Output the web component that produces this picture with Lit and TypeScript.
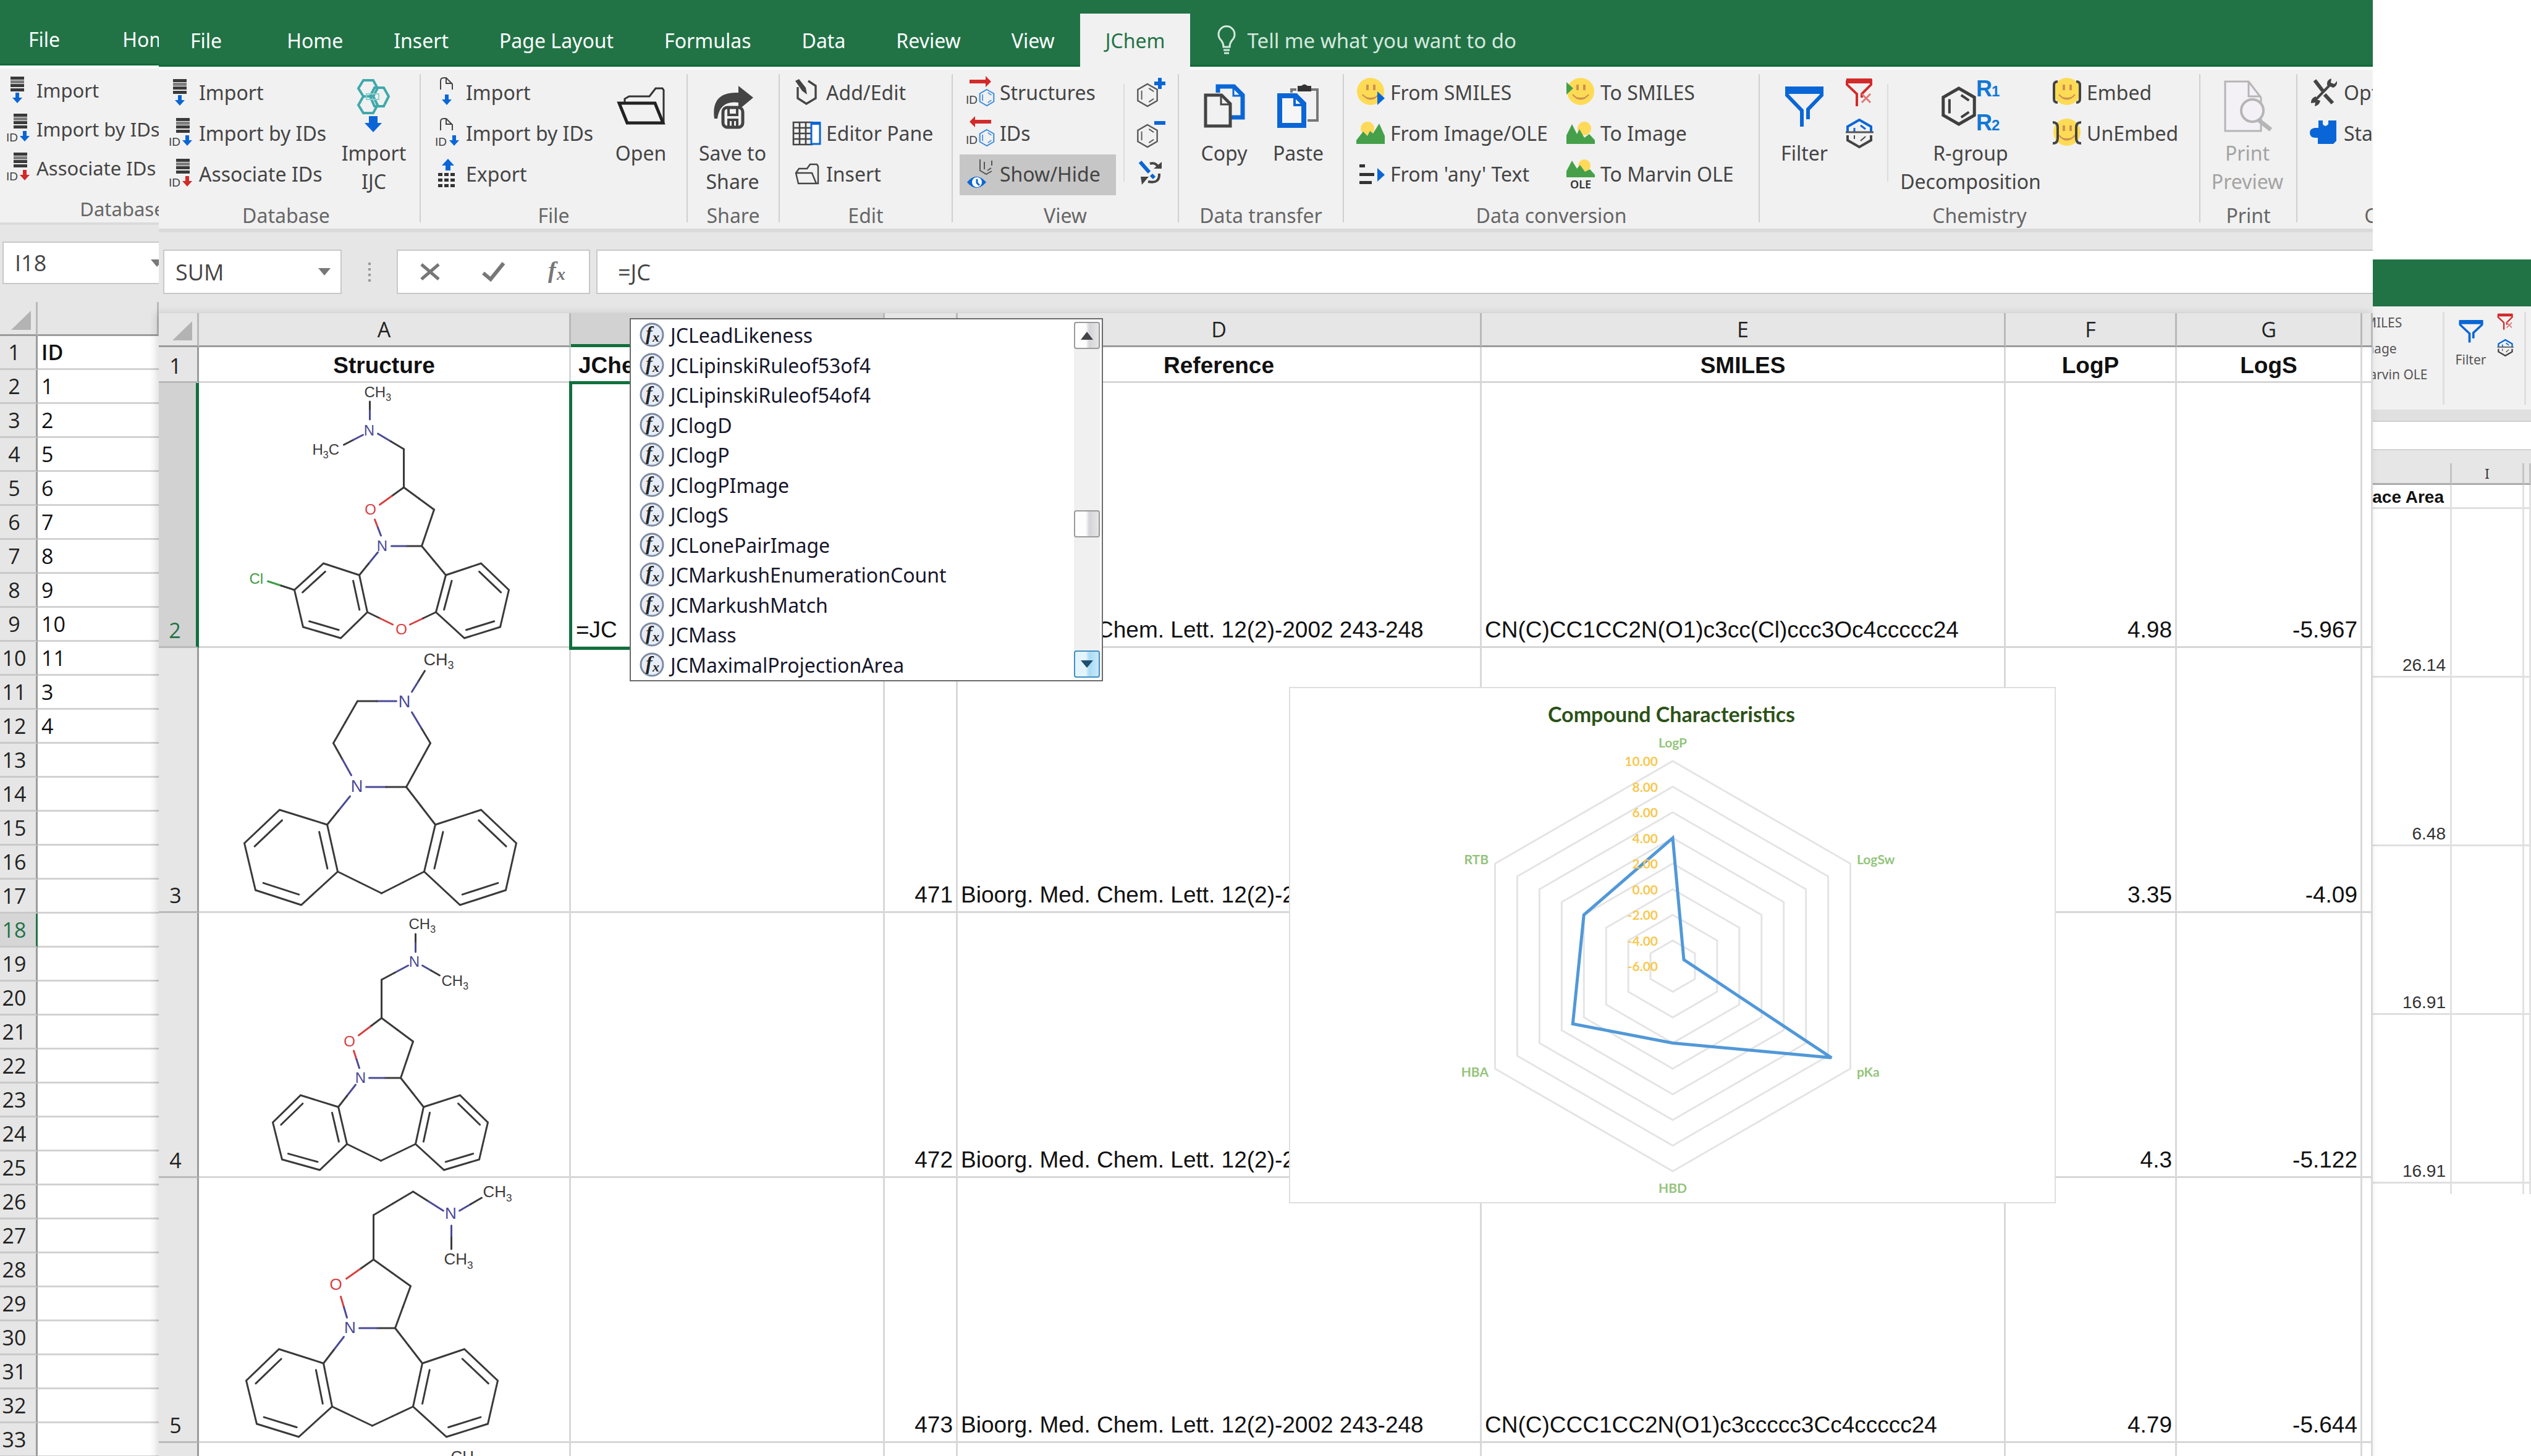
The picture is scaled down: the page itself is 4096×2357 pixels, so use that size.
import { LitElement, html, svg, css, nothing, TemplateResult, SVGTemplateResult } from "lit";
import { customElement } from "lit/decorators.js";
import { classMap } from "lit/directives/class-map.js";

const DARK = "#444";
const BLUE = "#0a66d6";
const RED = "#d22a2a";
const TEAL = "#3fa9ab";
const GREEN = "#45a049";
const SUN = "#ffd95a";

type Art = SVGTemplateResult;

/* ---------- icon building blocks ---------- */

const stack = (x: number, y: number): Art => svg`
  <path d="M${x} ${y}h22v5h-22zM${x} ${y + 12}h22v5h-22zM${x} ${y + 19}h22v5h-22z" fill="#3a3a3a"/>
  <path d="M${x} ${y + 6}h22v5h-22z" fill="#7d7d7d"/>`;
const down = (cx: number, y: number, c: string): Art => svg`
  <path d="M${cx - 3} ${y}h6v8h5l-8 9l-8 -9h5z" fill="${c}"/>`;
const idText = (x: number, y: number): Art => svg`
  <text x="${x}" y="${y}" font-family="Liberation Sans, sans-serif" font-size="19" fill="${DARK}">ID</text>`;
const pageCurl = (x: number, y: number): Art => svg`
  <path d="M${x} ${y + 20}v-14q0 -5 5 -5h4l10 10v9M${x + 9} ${y + 1}v9h9" fill="none" stroke="${DARK}" stroke-width="2"/>`;
const benzene = (cx: number, cy: number, r: number, c: string, w = 2): Art => {
  const k = r * 0.87;
  return svg`<path d="M${cx} ${cy - r}l${k} ${r / 2}v${r}l${-k} ${r / 2}l${-k} ${-r / 2}v${-r}z" fill="none" stroke="${c}" stroke-width="${w}"/>
  <path d="M${cx - k * 0.6} ${cy - r * 0.4}v${r * 0.8}M${cx + k * 0.15} ${cy - r * 0.62}l${k * 0.5} ${r * 0.3}M${cx + k * 0.15} ${cy + r * 0.62}l${k * 0.5} ${-r * 0.3}" fill="none" stroke="${c}" stroke-width="${w * 0.8}"/>`;
};
const smile = (cx: number, cy: number): Art => svg`
  <circle cx="${cx}" cy="${cy}" r="22" fill="#fddb55"/>
  <path d="M${cx - 5} ${cy - 11}v9M${cx + 6} ${cy - 11}v9" stroke="#cf8f52" stroke-width="4"/>
  <path d="M${cx - 13} ${cy + 5}q13 15 26 0q-4 6 -13 6t-13 -6z" fill="#cf8f52" stroke="#cf8f52" stroke-width="2"/>`;

const ART: Record<string, Art> = {
  dbImport: svg`${stack(8, 2)}${down(19, 28, BLUE)}`,
  dbIds: svg`${stack(13, -1)}${idText(1, 44)}${down(31, 27, BLUE)}`,
  dbAssoc: svg`${stack(13, -1)}${idText(1, 44)}${down(31, 27, RED)}`,
  fileImport: svg`${pageCurl(9, -1)}${down(19, 27, BLUE)}`,
  fileIds: svg`${pageCurl(9, -1)}${idText(0, 44)}${down(31, 27, BLUE)}`,
  fileExport: svg`<path d="M17 18v-8h-6l10 -11l10 11h-6v8z" fill="${BLUE}"/>
    <path d="M5 22h7v5h-7zM15 22h7v5h-7zM25 22h7v5h-7zM5 31h7v5h-7zM15 31h7v5h-7zM25 31h7v5h-7zM5 40h7v5h-7zM15 40h7v5h-7zM25 40h7v5h-7z" fill="#333"/>`,
  addEdit: svg`<path d="M9 15v18l14 9l15 -9v-20l-12 -8" fill="none" stroke="${DARK}" stroke-width="3.4"/>
    <path d="M5 5l6 -3l11 14l2 11l-8 -6z" fill="${DARK}"/>`,
  editorPane: svg`<path d="M2 6h30v36h-30zM2 15h30M2 24h30M2 33h30M12 6v36M22 6v36" fill="none" stroke="${DARK}" stroke-width="2.6"/>
    <rect x="31" y="7" width="14" height="34" fill="#fff" stroke="${BLUE}" stroke-width="3"/><path d="M30 5h16v5h-16z" fill="${BLUE}"/>`,
  insert: svg`<path d="M6 22l5 -7h13l5 -7h11l2 3v28h-32zM6 22h26l7 17" fill="none" stroke="${DARK}" stroke-width="2.4"/>`,
  structures: svg`<path d="M6 3h26v-6l9 9l-9 9v-6h-26z" fill="${RED}"/>${idText(0, 42)}${benzene(34, 32, 13, "#3d8ade")}`,
  ids: svg`<path d="M41 2h-26v-6l-9 9l9 9v-6h26z" fill="${RED}"/>${idText(0, 41)}${benzene(34, 31, 13, "#3d8ade")}`,
  showHide: svg`<path d="M23 0v18l10 6l9 -5M42 2v8M30 4v12M35 18l6 -4" fill="none" stroke="#555" stroke-width="2"/>
    <path d="M2 37q15 -18 31 0q-16 18 -31 0z" fill="${BLUE}"/><circle cx="18" cy="37" r="8" fill="#fff"/><path d="M18 32v6l4 4" stroke="${BLUE}" stroke-width="3" fill="none"/>`,
  hexPlus: svg`${benzene(17, 28, 18, "#5a5a5a", 2.4)}<path d="M37 0v18M28 9h18" stroke="${BLUE}" stroke-width="6"/>`,
  hexMinus: svg`${benzene(17, 28, 18, "#5a5a5a", 2.4)}<path d="M28 7h18" stroke="${BLUE}" stroke-width="6"/>`,
  refresh: svg`<path d="M5 4l15 17M23 25l5 5" stroke="${BLUE}" stroke-width="6"/>
    <path d="M21 7q9 -3 14 6M36 23q1 17 -18 13" fill="none" stroke="${DARK}" stroke-width="4"/>
    <path d="M27 15h13v-11zM6 28h13l-11 13z" fill="${DARK}"/>`,
  fromSmiles: svg`${smile(23, 22)}<path d="M34 22l12 11l-12 11z" fill="${BLUE}"/>`,
  toSmiles: svg`${smile(23, 22)}<path d="M0 7l11 10l-11 10z" fill="${GREEN}"/>`,
  fromImage: svg`<circle cx="18" cy="16" r="11" fill="${SUN}"/><path d="M0 41v-6l11 -14l7 7l4 -8l5 4l10 -16l9 20v13z" fill="${GREEN}"/>`,
  toImage: svg`<circle cx="29" cy="16" r="11" fill="${SUN}"/><path d="M0 41v-14l9 -18l8 16l4 -8l8 14l8 -6l9 10v6z" fill="${GREEN}"/>`,
  anyText: svg`<path d="M5 8h9v5h-9zM5 22h24v5h-24zM5 35h20v5h-20z" fill="#333"/><path d="M34 14l12 11l-12 11z" fill="${BLUE}"/>`,
  ole: svg`<circle cx="29" cy="10" r="10" fill="${SUN}"/><path d="M0 29v-10l9 -17l8 13l5 -6l8 11l8 -4l8 9v4z" fill="${GREEN}"/>
    <text x="23" y="47" text-anchor="middle" font-family="Noto Sans, sans-serif" font-weight="600" font-size="18" fill="#333">OLE</text>`,
  filterX: svg`<path d="M2 4h39v7l-15 15v6M2 4v7l16 15v20" fill="none" stroke="${RED}" stroke-width="4"/><path d="M1 1h41v8h-41z" fill="${RED}"/><path d="M26 26l14 14M40 26l-14 14" stroke="#df7777" stroke-width="3"/>`,
  halfHex: svg`<path d="M3 22v-9l19 -11l19 11v9" fill="none" stroke="${BLUE}" stroke-width="4"/><path d="M14 15v6M24 11l8 6" stroke="${BLUE}" stroke-width="3"/>
    <path d="M0 22h45" stroke="#555" stroke-width="3"/><path d="M3 27v8l19 11l19 -11v-8" fill="none" stroke="${DARK}" stroke-width="4"/><path d="M14 27v6M24 36l8 -7" stroke="${DARK}" stroke-width="2"/>`,
  embed: svg`${smile(23, 22)}<path d="M8 6q-6 0 -6 6v22q0 6 6 6M38 6q6 0 6 6v22q0 6 -6 6" fill="none" stroke="${DARK}" stroke-width="4"/>`,
  unEmbed: svg`${smile(23, 22)}<path d="M0 6q8 0 8 8v18q0 8 -8 8M46 6q-8 0 -8 8v18q0 8 8 8" fill="none" stroke="${DARK}" stroke-width="4"/>`,
  tools: svg`<path d="M8 4l13 17M24 27l13 14" stroke="${DARK}" stroke-width="6"/><path d="M34 10l-24 25" stroke="${DARK}" stroke-width="4"/>
    <path d="M28 12q-1 -9 7 -11l-1 7l6 2l4 -5q1 8 -6 11zM2 41q-1 -8 8 -11l1 5l6 2q-1 7 -9 9l1 -6z" fill="${DARK}"/>`,
  puzzle: svg`<path d="M14 3h7v6q4 6 9 0v-6h13v33l-5 5h-25v-10h-5q-8 -1 -8 -8t8 -8h6z" fill="${BLUE}"/>`,
  ijc: svg`<g fill="none" stroke="${TEAL}" stroke-width="4"><path d="M20 2h16l7 13l-7 13h-16l-8 -13zM20 28h16l7 14l-7 13h-16l-8 -13zM38 14h15l8 14l-8 16h-15l-7 -16z"/></g>
    <path d="M25 24h20v9h-20z" fill="none" stroke="#8fcfd0" stroke-width="2"/><path d="M29 60h14v11h7l-14 15l-14 -15h7z" fill="${BLUE}"/>`,
  open: svg`<path d="M12 28v-9l7 -4h33l10 -13h11l2 3v53" fill="none" stroke="#333" stroke-width="3"/><path d="M3 26h58l13 32h-58z" fill="none" stroke="#222" stroke-width="5"/>`,
  saveShare: svg`<path d="M3 56Q-3 12 42 14V3L66 22L42 42V30Q12 26 8 56z" fill="${DARK}"/>
    <rect x="17" y="38" width="32" height="32" rx="7" fill="#f1f1f1" stroke="${DARK}" stroke-width="5"/><path d="M26 40v10h14v-10M26 69v-11h14v11M33 58v10" fill="none" stroke="${DARK}" stroke-width="4"/>`,
  copy: svg`<path d="M24 14v-10h26l14 14v36h-18" fill="none" stroke="${BLUE}" stroke-width="7"/><path d="M49 4v15h15" fill="none" stroke="${BLUE}" stroke-width="3"/>
    <path d="M4 18h26l14 14v36h-40z" fill="#f1f1f1" stroke="${DARK}" stroke-width="5"/><path d="M29 18v15h14" fill="none" stroke="${DARK}" stroke-width="3"/>`,
  paste: svg`<path d="M24 14v-5h8M56 9h10v50h-16" fill="none" stroke="#777" stroke-width="4"/><path d="M34 3h6q5 -5 10 0h6v9h-22z" fill="#333"/>
    <path d="M5 19h26l13 13v35h-39z" fill="#f6f6f6" stroke="${BLUE}" stroke-width="8"/><path d="M29 19v15h14" fill="none" stroke="${BLUE}" stroke-width="4"/>`,
  filter: svg`<path d="M4 6h56v10l-22 23v16M4 6v10l24 25v26" fill="none" stroke="${BLUE}" stroke-width="6"/><path d="M1 2h62v12h-62z" fill="${BLUE}"/>`,
  rGroup: svg`${benzene(28, 44, 29, "#3f3f3f", 5)}
    <g font-family="Liberation Sans, sans-serif" font-weight="700" fill="#1277d6"><text x="56" y="28" font-size="36">R</text><text x="81" y="28" font-size="24">1</text><text x="56" y="83" font-size="36">R</text><text x="81" y="83" font-size="24">2</text></g>`,
  preview: svg`<path d="M4 3h38l20 26v54h-58z" fill="#f4f1f6" stroke="#b5b5b5" stroke-width="3"/><path d="M42 3v24h20" fill="none" stroke="#b5b5b5" stroke-width="3"/>
    <circle cx="48" cy="50" r="18" fill="#f4f1f6" stroke="#b5b5b5" stroke-width="4"/><path d="M59 66l19 15" stroke="#b5b5b5" stroke-width="7"/>`,
};

const icon = (name: string, w: number, h: number) =>
  html`<svg viewBox="0 0 ${w} ${h}" width=${w} height=${h} aria-hidden="true">${ART[name]}</svg>`;

/* ---------- molecules ---------- */

type P = [number, number];
const ATOM: Record<string, string> = { C: "#3a3a3a", N: "#4a4a96", O: "#d94040", L: "#3f9a45" };
interface Molecule {
  size: number;
  bonds: string[];
  rings: P[][];
  labels: [string, number, number][];
}

const MOLECULES: Molecule[] = [
  {
    size: 24,
    bonds: [
      "C277,32 N277,61", "C235,102 N266,86", "N290,84 C332,109", "C332,109 C332,171", "C332,171 O293,199",
      "C332,171 C381,207", "C381,207 C361,266", "C361,266 N312,266", "O285,223 N295,249", "N290,276 C260,313",
      "L112,323 C155,337", "C273,373 O314,393", "O342,393 C384,373", "C361,266 C400,313",
    ],
    rings: [
      [[260, 313], [202, 294], [155, 337], [169, 397], [230, 415], [273, 373]],
      [[400, 313], [457, 294], [502, 337], [488, 397], [430, 415], [384, 373]],
    ],
    labels: [["CH3", 268, 16], ["N", 276, 78], ["H3C", 184, 109], ["O", 278, 206], ["N", 297, 265], ["Cl", 82, 318], ["O", 328, 400]],
  },
  {
    size: 27,
    bonds: [
      "C366,39 N345,73", "N320,88 C257,88", "C257,88 C218,156", "C218,156 N247,208", "N271,227 C336,227",
      "C336,227 C375,156", "C375,156 N345,106", "N245,242 C208,288", "C225,364 C296,399", "C296,399 C365,364", "C336,227 C383,288",
    ],
    rings: [
      [[208, 288], [131, 264], [74, 318], [92, 394], [166, 418], [225, 364]],
      [[383, 288], [457, 264], [514, 318], [497, 394], [423, 418], [365, 364]],
    ],
    labels: [["CH3", 364, 20], ["N", 333, 88], ["N", 256, 225]],
  },
  {
    size: 24,
    bonds: [
      "C351,36 N351,65", "N362,87 C390,103", "N339,87 C296,110", "C296,110 C296,172", "C296,172 O259,200",
      "C296,172 C347,210", "C347,210 C327,269", "C327,269 N276,269", "O251,225 N260,253", "N254,280 C226,316",
      "C240,376 C295,403", "C295,403 C351,376", "C327,269 C364,316",
    ],
    rings: [
      [[226, 316], [165, 297], [120, 341], [135, 401], [196, 418], [240, 376]],
      [[364, 316], [423, 297], [468, 341], [454, 401], [397, 418], [351, 376]],
    ],
    labels: [["CH3", 340, 19], ["N", 349, 80], ["CH3", 393, 111], ["O", 244, 209], ["N", 262, 268]],
  },
  {
    size: 26,
    bonds: [
      "C283,62 C347,24", "C347,24 N396,55", "N422,55 C458,34", "N409,79 C409,117", "C283,62 C283,134",
      "C283,134 O239,165", "C283,134 C343,177", "C343,177 C318,245", "C318,245 N260,245", "O230,194 N240,228",
      "N235,259 C202,302", "C216,372 C281,403", "C281,403 C347,372", "C318,245 C362,302",
    ],
    rings: [
      [[202, 302], [130, 279], [77, 330], [94, 400], [162, 421], [216, 372]],
      [[362, 302], [430, 279], [484, 330], [468, 400], [401, 421], [347, 372]],
    ],
    labels: [["N", 408, 59], ["CH3", 460, 24], ["CH3", 397, 133], ["O", 222, 174], ["N", 245, 244]],
  },
  { size: 26, bonds: [], rings: [], labels: [["CH3", 408, 24]] },
];

const half = (x1: number, y1: number, x2: number, y2: number, c: string): Art =>
  svg`<line x1=${x1} y1=${y1} x2=${x2} y2=${y2} stroke=${c}></line>`;

const drawBond = (b: string): Art => {
  const [p, q] = b.split(" ").map((s) => ({ el: s[0], xy: s.slice(1).split(",").map(Number) }));
  const mx = (p.xy[0] + q.xy[0]) / 2;
  const my = (p.xy[1] + q.xy[1]) / 2;
  return svg`${half(p.xy[0], p.xy[1], mx, my, ATOM[p.el])}${half(mx, my, q.xy[0], q.xy[1], ATOM[q.el])}`;
};

const drawRing = (r: P[]): Art => {
  const cx = r.reduce((s, p) => s + p[0], 0) / 6;
  const cy = r.reduce((s, p) => s + p[1], 0) / 6;
  const inner = r.map(([x, y]) => [cx + (x - cx) * 0.78, cy + (y - cy) * 0.78]);
  return svg`<polygon points=${r.map((p) => p.join()).join(" ")} fill="none" stroke=${ATOM.C}></polygon>
    ${[1, 3, 5].map((i) => half(inner[i][0], inner[i][1], inner[(i + 1) % 6][0], inner[(i + 1) % 6][1], ATOM.C))}`;
};

const drawLabel = ([t, x, y]: [string, number, number], size: number): Art => {
  const base = y + size * 0.36;
  const drop = size * 0.25;
  const sub = size * 0.66;
  if (t === "CH3") return svg`<text x=${x} y=${base} fill=${ATOM.C}>CH<tspan dy=${drop} font-size=${sub}>3</tspan></text>`;
  if (t === "H3C") return svg`<text x=${x} y=${base} fill=${ATOM.C}>H<tspan dy=${drop} font-size=${sub}>3</tspan><tspan dy=${-drop}>C</tspan></text>`;
  if (t === "Cl") return svg`<text x=${x} y=${base} fill=${ATOM.L}>Cl</text>`;
  return svg`<text x=${x} y=${base} text-anchor="middle" fill=${ATOM[t]}>${t}</text>`;
};

const molecule = (m: Molecule) => html`<svg class="mol" viewBox="1 2 598 426" role="img" aria-label="Chemical structure"
  font-family="Liberation Sans, Arial, sans-serif" font-size=${m.size} stroke-width="3" stroke-linecap="round">
  ${m.bonds.map(drawBond)}${m.rings.map(drawRing)}<g stroke="none">${m.labels.map((l) => drawLabel(l, m.size))}</g></svg>`;

/* ---------- shared look ---------- */

const base = css`
  * { box-sizing: border-box; }
  button, input { font: inherit; color: inherit; border: 0; background: none; padding: 0; margin: 0; border-radius: 0; }
  button { cursor: pointer; text-align: left; white-space: nowrap; }
  svg { display: block; flex: none; overflow: visible; }
  table { border-collapse: separate; border-spacing: 0; table-layout: fixed; width: 100%; }
`;

const chrome = css`
  .tabs { display: flex; align-items: flex-end; height: var(--tabs-h, 113px); overflow: hidden; color: #fff; font-size: 32px;
    background: linear-gradient(to top, #fbfbfb 0 5px, #0f6a39 5px 8px, #217346 8px); }
  .tab { flex: none; height: 91px; padding: 0 41px 5px; }
  .tab:first-child { padding-left: var(--file-pad, 51px); padding-right: var(--file-end, 64px); }
  .tab.on { background: #f1f1f1; color: #217346; }
  .tell { display: flex; align-items: center; gap: 18px; height: 91px; padding: 0 0 5px 44px; color: #d6e8dd; flex: none; font-size: 33px; }
  .ribbon { display: flex; align-items: flex-start; overflow: hidden; padding-top: 5px; background: #f1f1f1;
    border-bottom: 6px solid #dadada; color: #444; font-size: 32px; }
  .group { flex: none; }
  .body { display: flex; height: var(--body-h, 210px); }
  .cap { text-align: center; line-height: 42px; color: #666; }
  .sep { flex: none; width: 2px; height: 240px; margin-top: 2px; background: #d0d0d0; }
  .inner { flex: none; width: 2px; height: 158px; margin-top: 18px; background: #dcdcdc; }
  .rows { display: flex; flex-direction: column; flex: none; }
  .cmd { display: flex; align-items: center; gap: 9px; height: var(--row-h, 66px); padding-bottom: 3px; }
  .cmd.on { background: #c6c6c6; }
  .big { display: flex; flex-direction: column; align-items: center; flex: none; line-height: 46px; text-align: center; height: 210px; }
  .pic { display: flex; align-items: center; justify-content: center; height: 107px; }
  .formula { display: flex; padding: 28px 0 0 7px; background: #e6e6e6; font-family: "Open Sans", "Noto Sans", sans-serif; font-size: 36px; color: #444; }
  .box { display: flex; align-items: center; height: 72px; background: #fff; border: 2px solid #c8c8c8; }
  .name { flex: none; width: 289px; padding: 0 16px 0 18px; }
  .name input { flex: 1; min-width: 0; }
  .arrow { border: 10px solid transparent; border-top: 12px solid #777; border-bottom: 0; }
`;

const triangle = html`<svg width="32" height="31" viewBox="0 0 32 31" aria-hidden="true"><path d="M32 0v31h-32z" fill="#b3b3b3"/></svg>`;
const cmd = (ic: string, label: string, w = 46, cls = "") =>
  html`<button class="cmd ${cls}">${icon(ic, w, 48)}${label}</button>`;

/* ---------- formula auto-complete ---------- */

@customElement("function-list")
class FunctionList extends LitElement {
  static styles = [base, css`
    :host { display: flex; width: 766px; height: 588px; padding: 2px 3px 0 15px; background: #fff; border: 2px solid #6a6a6a;
      font: 32px "Noto Sans", sans-serif; color: #16162a; }
    .items { flex: 1; display: grid; grid-auto-rows: 1fr; }
    .item { display: flex; align-items: center; gap: 9px; line-height: 1; }
    .bar { width: 42px; display: flex; flex-direction: column; background: #f0f0f0; margin: 2px 0 4px; }
    .knob { height: 44px; border: 2px solid #9a9a9a; border-radius: 4px; background: linear-gradient(to right, #fdfdfd 0 45%, #d4d4d8 60%, #e6e6e6);
      display: flex; align-items: center; justify-content: center; }
    .knob.hot { border-color: #3f8fc4; background: linear-gradient(to right, #e4f4fc 0 45%, #a9dbf5 60%, #c9e9f9); }
    .above { flex: 263; } .below { flex: 185; }
  `];
  private names = ["JCLeadLikeness", "JCLipinskiRuleof53of4", "JCLipinskiRuleof54of4", "JClogD", "JClogP", "JClogPImage", "JClogS",
    "JCLonePairImage", "JCMarkushEnumerationCount", "JCMarkushMatch", "JCMass", "JCMaximalProjectionArea"];
  render() {
    return html`<div class="items" role="listbox" aria-label="Functions">
        ${this.names.map((n) => html`<button class="item" role="option">
          <svg width="40" height="40" viewBox="0 0 40 40" aria-hidden="true"><circle cx="19" cy="19" r="18" fill="#e8edf6" stroke="#7c8aa3" stroke-width="3"/>
            <g font-family="Liberation Serif, serif" font-style="italic" font-weight="700" fill="#222"><text x="9" y="27" font-size="32">f</text><text x="20" y="30" font-size="22">x</text></g></svg>${n}</button>`)}
      </div>
      <div class="bar">
        <button class="knob" aria-label="Scroll up"><svg width="20" height="13" viewBox="0 0 20 13"><path d="M10 0l10 13h-20z" fill="#444"/></svg></button>
        <div class="above"></div><div class="knob"></div><div class="below"></div>
        <button class="knob hot" aria-label="Scroll down"><svg width="20" height="12" viewBox="0 0 20 12"><path d="M0 0h20l-10 12z" fill="#1f4f6e"/></svg></button>
      </div>`;
  }
}

/* ---------- radar chart ---------- */

@customElement("radar-chart")
class RadarChart extends LitElement {
  static styles = [base, css`
    :host { display: block; width: 1241px; height: 836px; background: #fff; border: 2px solid #dedede; }
    .plot { width: 100%; height: 100%; }
  `];
  private axes: [string, number][] = [["LogP", 4], ["LogSw", -5], ["pKa", 8.3], ["HBD", 0], ["HBA", 3], ["RTB", 2]];
  private at(axis: number, rings: number): P {
    const a = (axis * Math.PI) / 3;
    return [621 + Math.sin(a) * rings * 41.5, 454 - Math.cos(a) * rings * 41.5];
  }
  private poly(f: (i: number) => number) {
    return [0, 1, 2, 3, 4, 5].map((i) => this.at(i, f(i)).join()).join(" ");
  }
  render() {
    const spots: [number, number, string][] = [[621, 93, "middle"], [919, 282, "start"], [919, 626, "start"], [621, 814, "middle"], [323, 626, "end"], [323, 282, "end"]];
    return html`<svg class="plot" viewBox="2 4 1237 832" role="img" aria-label="Compound Characteristics radar chart" font-family="Lato, sans-serif" font-weight="700" font-size="21">
      <g fill="none" stroke="#e4e4e4" stroke-width="3">${[1, 2, 3, 4, 5, 6, 7, 8].map((r) => svg`<polygon points=${this.poly(() => r)}></polygon>`)}</g>
      <polygon points=${this.poly((i) => (this.axes[i][1] + 6) / 2)} fill="none" stroke="#5198d8" stroke-width="5"></polygon>
      <g fill="#f8c851" text-anchor="end">${[10, 8, 6, 4, 2, 0, -2, -4, -6].map((v, i) => svg`<text x="597" y=${130 + i * 41.5}>${v.toFixed(2)}</text>`)}</g>
      <g fill="#94c47c">${this.axes.map(([n], i) => svg`<text x=${spots[i][0]} y=${spots[i][1] + 7} text-anchor=${spots[i][2]}>${n}</text>`)}</g>
      <text x="619" y="59" font-size="34" text-anchor="middle" fill="#2c5217">Compound Characteristics</text>
    </svg>`;
  }
}

/* ---------- spreadsheet in front ---------- */

interface Row { id: string; ref: string; smiles: string; logP: string; logS: string }

@customElement("front-workbook")
class FrontWorkbook extends LitElement {
  static styles = [base, chrome, css`
    :host { display: block; position: relative; z-index: 1; min-width: 0; background: #fff; font-family: "Noto Sans", "Open Sans", sans-serif; }
    .label-db { padding-right: 10px; }
    .show { width: 276px; padding-left: 11px; }
    .show .cmd { padding-left: 10px; width: 253px; }
    .lead { width: 13px; flex: none; }
    .fx { flex: none; width: 313px; margin-right: 10px; }
    .fx button { flex: 1; display: flex; justify-content: center; }
    .dots { flex: none; width: 89px; display: flex; flex-direction: column; align-items: center; justify-content: center; gap: 5px; }
    .dot { width: 4px; height: 4px; background: #9a9a9a; }
    .entry { flex: 1; padding-left: 33px; border-right: 0; }
    .entry input { width: 100%; height: 100%; }
    .dim { color: #a3a3a3; }
    .gap { height: 31px; background: #e6e6e6; }
    .sheet { position: relative; box-shadow: -4px 0 12px rgba(0, 0, 0, 0.14); }
    .list { position: absolute; left: 762px; top: 8px; }
    .chart { position: absolute; left: 1829px; top: 605px; }
    .c0 { width: 65px; } .cA { width: 602px; } .cB { width: 508px; } .cC { width: 118px; } .cF { width: 277px; } .cG { width: 300px; } .cH { width: 17px; }
    thead th { height: 55px; background: #e6e6e6; border-right: 3px solid #b9b9b9; border-bottom: 3px solid #9b9b9b; padding: 0;
      font: 34px/50px "Open Sans", sans-serif; color: #222; overflow: hidden; }
    thead .sel { background: #d2d2d2; border-bottom: 5px solid #10703c; }
    .corner svg { margin-left: 22px; margin-top: 4px; }
    .num { height: 429px; background: #e6e6e6; border-right: 3px solid #9b9b9b; border-bottom: 3px solid #b9b9b9; padding: 0 8px 5px 0; vertical-align: bottom;
      font: 34px/42px "Open Sans", sans-serif; color: #222; }
    .num.sel { background: #d2d2d2; color: #217346; border-right: 5px solid #10703c; }
    .first .num, .first .cell { height: 58px; font-weight: 700; text-align: center; padding-bottom: 4px; }
    .first .num { font-weight: 400; }
    .first .fnhead { text-align: left; padding-left: 12px; }
    .cell { height: 429px; border-right: 3px solid #d9d9d9; border-bottom: 3px solid #d6d6d6; padding: 0 5px 5px; vertical-align: bottom;
      font: 37px/42px "Liberation Sans", Arial, sans-serif; color: #111; white-space: nowrap; overflow: hidden; }
    .draw { padding: 0; vertical-align: top; }
    .mol { width: 100%; height: 426px; }
    .right { text-align: right; }
    .active { outline: 5px solid #10703c; outline-offset: -2px; padding-left: 8px; overflow: visible; }
  `];

  private rows: Row[] = [
    { id: "470", ref: "Bioorg. Med. Chem. Lett. 12(2)-2002 243-248", smiles: "CN(C)CC1CC2N(O1)c3cc(Cl)ccc3Oc4ccccc24", logP: "4.98", logS: "-5.967" },
    { id: "471", ref: "Bioorg. Med. Chem. Lett. 12(2)-2002 243-248", smiles: "", logP: "3.35", logS: "-4.09" },
    { id: "472", ref: "Bioorg. Med. Chem. Lett. 12(2)-2002 243-248", smiles: "", logP: "4.3", logS: "-5.122" },
    { id: "473", ref: "Bioorg. Med. Chem. Lett. 12(2)-2002 243-248", smiles: "CN(C)CCC1CC2N(O1)c3ccccc3Cc4ccccc24", logP: "4.79", logS: "-5.644" },
    { id: "", ref: "", smiles: "", logP: "", logS: "" },
  ];

  private group(width: number, label: string, body: TemplateResult, cls = "") {
    return html`<div class="group" style="width:${width}px"><div class="body">${body}</div><div class="cap ${cls}">${label}</div></div>`;
  }
  private col(pad: number, width: number, items: TemplateResult[]) {
    return html`<div class="rows" style="padding-left:${pad}px;width:${width}px">${items}</div>`;
  }
  private big(ic: string, w: number, h: number, width: number, lines: string[], cls = "") {
    return html`<button class="big ${cls}" style="width:${width}px"><span class="pic">${icon(ic, w, h)}</span>${lines.map((l) => html`<span>${l}</span>`)}</button>`;
  }
  private side(ic: string, label: string) {
    return html`<button class="cmd" aria-label=${label}>${icon(ic, 46, 48)}</button>`;
  }

  private ribbon() {
    const sep = html`<span class="sep"></span>`;
    return html`<div class="ribbon">
      ${this.group(422, "Database", html`${this.col(15, 283, [cmd("dbImport", "Import", 41), cmd("dbIds", "Import by IDs", 41), cmd("dbAssoc", "Associate IDs", 41)])}
        ${this.big("ijc", 74, 88, 130, ["Import", "IJC"])}`, "label-db")}
      ${sep}${this.group(430, "File", html`${this.col(23, 290, [cmd("fileImport", "Import", 41), cmd("fileIds", "Import by IDs", 41), cmd("fileExport", "Export", 41)])}
        ${this.big("open", 76, 62, 132, ["Open"])}`)}
      ${sep}${this.group(147, "Share", this.big("saveShare", 66, 72, 145, ["Save to", "Share"]))}
      ${sep}${this.group(278, "Edit", this.col(20, 278, [cmd("addEdit", "Add/Edit"), cmd("editorPane", "Editor Pane"), cmd("insert", "Insert")]))}
      ${sep}${this.group(364, "View", html`<div class="rows show">${cmd("structures", "Structures")}${cmd("ids", "IDs")}${cmd("showHide", "Show/Hide", 46, "on")}</div>
        <span class="inner"></span>${this.col(20, 70, [this.side("hexPlus", "Add structure"), this.side("hexMinus", "Remove structure"), this.side("refresh", "Refresh")])}`)}
      ${sep}${this.group(265, "Data transfer", html`<span class="lead"></span>${this.big("copy", 68, 72, 120, ["Copy"])}${this.big("paste", 70, 72, 120, ["Paste"])}`)}
      ${sep}${this.group(671, "Data conversion", html`${this.col(20, 360, [cmd("fromSmiles", "From SMILES"), cmd("fromImage", "From Image/OLE"), cmd("anyText", "From 'any' Text")])}
        ${this.col(0, 310, [cmd("toSmiles", "To SMILES"), cmd("toImage", "To Image"), cmd("ole", "To Marvin OLE")])}`)}
      ${sep}${this.group(711, "Chemistry", html`<span class="lead"></span>${this.big("filter", 64, 68, 118, ["Filter"])}
        ${this.col(8, 75, [this.side("filterX", "Clear filter"), this.side("halfHex", "Filter by structure")])}<span class="inner"></span>
        ${this.big("rGroup", 94, 88, 266, ["R-group", "Decomposition"])}${this.col(0, 230, [cmd("embed", "Embed"), cmd("unEmbed", "UnEmbed")])}`)}
      ${sep}${this.group(155, "Print", this.big("preview", 80, 86, 152, ["Print", "Preview"], "dim"))}
      ${sep}${this.group(424, "Configuration", this.col(20, 400, [cmd("tools", "Options"), cmd("puzzle", "Standardize")]))}
    </div>`;
  }

  render() {
    const tabs = ["File", "Home", "Insert", "Page Layout", "Formulas", "Data", "Review", "View", "JChem"];
    const letters = ["A", "B", "C", "D", "E", "F", "G", "H"];
    return html`
      <nav class="tabs">${tabs.map((t) => html`<button class="tab ${classMap({ on: t === "JChem" })}">${t}</button>`)}
        <button class="tell"><svg width="30" height="46" viewBox="0 0 30 46" aria-hidden="true"><path d="M10 34q0 -6 -4 -11a13 13 0 1 1 18 0q-4 5 -4 11zM10 39h10M11 44h8" fill="none" stroke="#d6e8dd" stroke-width="3"/></svg>Tell me what you want to do</button>
      </nav>
      ${this.ribbon()}
      <div class="formula">
        <div class="box name"><input aria-label="Name box" value="SUM"><button class="arrow" aria-label="Open name list"></button></div>
        <div class="dots"><i class="dot"></i><i class="dot"></i><i class="dot"></i><i class="dot"></i></div>
        <div class="box fx">
          <button aria-label="Cancel"><svg width="34" height="28" viewBox="0 0 34 28"><path d="M3 2l28 24M31 2l-28 24" stroke="#777" stroke-width="5"/></svg></button>
          <button aria-label="Enter"><svg width="38" height="32" viewBox="0 0 38 32"><path d="M2 18l12 10l21 -26" fill="none" stroke="#777" stroke-width="6"/></svg></button>
          <button aria-label="Insert function"><svg width="36" height="38" viewBox="0 0 36 38"><g font-family="Liberation Serif, serif" font-style="italic" font-weight="700" fill="#777"><text x="3" y="29" font-size="38">f</text><text x="17" y="32" font-size="28">x</text></g></svg></button>
        </div>
        <div class="box entry"><input aria-label="Formula" value="=JC"></div>
      </div>
      <div class="gap"></div>
      <div class="sheet">
        <table>
          <colgroup><col class="c0"><col class="cA"><col class="cB"><col class="cC"><col><col><col class="cF"><col class="cG"><col class="cH"></colgroup>
          <thead><tr><th class="corner">${triangle}</th>${letters.map((l) => html`<th class=${l === "B" ? "sel" : ""}>${l === "H" ? nothing : l}</th>`)}</tr></thead>
          <tbody>
            <tr class="first"><th class="num">1</th><td class="cell">Structure</td><td class="cell fnhead">JChem</td><td class="cell">ID</td><td class="cell">Reference</td><td class="cell">SMILES</td><td class="cell">LogP</td><td class="cell">LogS</td><td class="cell"></td></tr>
            ${this.rows.map((r, i) => html`<tr>
              <th class="num ${classMap({ sel: i === 0 })}">${i + 2}</th>
              <td class="cell draw">${molecule(MOLECULES[i])}</td>
              <td class="cell ${classMap({ active: i === 0 })}">${i === 0 ? "=JC" : nothing}</td>
              <td class="cell right">${r.id}</td><td class="cell">${r.ref}</td><td class="cell">${r.smiles}</td>
              <td class="cell right">${r.logP}</td><td class="cell right">${r.logS}</td><td class="cell"></td></tr>`)}
          </tbody>
        </table>
        <function-list class="list"></function-list>
        <radar-chart class="chart"></radar-chart>
      </div>`;
  }
}

/* ---------- workbook peeking out on the left ---------- */

@customElement("left-workbook")
class LeftWorkbook extends LitElement {
  static styles = [base, chrome, css`
    :host { display: block; overflow: hidden; min-width: 0; background: #fff; font-family: "Noto Sans", "Open Sans", sans-serif;
      --tabs-h: 111px; --file-pad: 46px; --file-end: 60px; --row-h: 63px; --body-h: 201px; }
    .group { width: 396px; }
    .ribbon { font-size: 31px; border-bottom-width: 4px; padding-bottom: 1px; }
    .rows { padding-left: 9px; }
    .formula { padding: 27px 0 29px 4px; }
    .name { width: 286px; height: 69px; padding-right: 24px; }
    .c0 { width: 61px; }
    .c1 { width: 196px; }
    thead th { height: 55px; padding: 0; background: #e6e6e6; border-right: 3px solid #b9b9b9; border-bottom: 3px solid #9b9b9b; }
    .corner svg { margin: 6px 0 0 18px; }
    .num, .cell { height: 55px; font: 34px/46px "Open Sans", sans-serif; white-space: nowrap; padding: 0; border-bottom: 3px solid #c9c9c9; }
    .num { background: #e6e6e6; border-right: 3px solid #9b9b9b; color: #222; padding-right: 12px; text-align: center; }
    .num.sel { background: #d6d6d6; color: #217346; border-right-color: #217346; }
    .cell { padding-left: 6px; color: #111; border-bottom-color: #d2d2d2; }
    .bold { font-weight: 600; }
  `];
  private values = ["ID", "1", "2", "5", "6", "7", "8", "9", "10", "11", "3", "4"];
  render() {
    return html`
      <nav class="tabs"><button class="tab">File</button><button class="tab">Home</button></nav>
      <div class="ribbon"><div class="group"><div class="body"><div class="rows">
        ${cmd("dbImport", "Import", 41)}${cmd("dbIds", "Import by IDs", 41)}${cmd("dbAssoc", "Associate IDs", 41)}</div></div><div class="cap">Database</div></div></div>
      <div class="formula"><div class="box name"><input aria-label="Name box" value="I18"><button class="arrow" aria-label="Open name list"></button></div></div>
      <table>
        <colgroup><col class="c0"><col class="c1"></colgroup>
        <thead><tr><th class="corner">${triangle}</th><th></th></tr></thead>
        <tbody>${Array.from({ length: 33 }, (_, i) => html`<tr><th class="num ${classMap({ sel: i === 17 })}">${i + 1}</th>
          <td class="cell ${classMap({ bold: i === 0 })}">${this.values[i] ?? nothing}</td></tr>`)}</tbody>
      </table>`;
  }
}

/* ---------- workbook peeking out on the right ---------- */

@customElement("right-workbook")
class RightWorkbook extends LitElement {
  static styles = [base, css`
    :host { display: block; overflow: hidden; min-width: 0; height: 1513px; background: #fff; font: 21px "Noto Sans", sans-serif; color: #555; }
    .top { height: 76px; background: #217346; }
    .ribbon { display: flex; justify-content: flex-end; height: 167px; background: #f1f1f1; padding-top: 5px; }
    .rows { flex: none; display: flex; flex-direction: column; width: 166px; }
    .cmd { height: 42px; }
    .sep { flex: none; width: 3px; height: 150px; margin-top: 4px; background: #dedede; }
    .big { flex: none; width: 85px; display: flex; flex-direction: column; align-items: center; padding-top: 16px; gap: 12px; line-height: 30px; height: 110px; }
    .side { flex: none; width: 44px; display: flex; flex-direction: column; padding-top: 6px; gap: 14px; }
    .tail { flex: none; width: 8px; }
    .strip { height: 20px; background: #e0e0e0; border-bottom: 2px solid #cfcfcf; }
    .input { display: block; width: 100%; height: 46px; background: #fff; border-bottom: 2px solid #d2d2d2; }
    .gap { height: 21px; background: #e6e6e6; }
    .c1 { width: 128px; } .c2 { width: 117px; }
    thead th { height: 35px; padding: 0; background: #e6e6e6; border-right: 3px solid #c4c4c4; border-bottom: 3px solid #ababab; font: 22px/30px "Noto Sans", sans-serif; color: #333; }
    .cell { height: 273px; border-right: 3px solid #e2e2e2; border-bottom: 3px solid #dfdfdf; padding: 0 7px 1px 0; vertical-align: bottom; text-align: right;
      font: 28px/32px "Liberation Sans", Arial, sans-serif; color: #333; overflow: hidden; }
    .first .cell { height: 39px; font-weight: 700; color: #111; white-space: nowrap; padding: 0 10px 0 0; }
    .over { display: flex; justify-content: flex-end; }
  `];
  render() {
    return html`<div class="top"></div>
      <div class="ribbon">
        <div class="rows"><button class="cmd">To SMILES</button><button class="cmd">To Image</button><button class="cmd">To Marvin OLE</button></div>
        <span class="sep"></span>
        <button class="big"><svg width="40" height="38" viewBox="0 0 64 68" preserveAspectRatio="none">${ART.filter}</svg>Filter</button>
        <div class="side"><button aria-label="Clear filter"><svg width="28" height="28" viewBox="0 0 46 48">${ART.filterX}</svg></button>
          <button aria-label="Filter by structure"><svg width="28" height="28" viewBox="0 0 46 48">${ART.halfHex}</svg></button></div>
        <span class="sep"></span><span class="tail"></span>
      </div>
      <div class="strip"></div><input class="input" aria-label="Formula"><div class="gap"></div>
      <table>
        <colgroup><col class="c1"><col class="c2"><col></colgroup>
        <thead><tr><th></th><th>I</th><th></th></tr></thead>
        <tbody><tr class="first"><td class="cell"><span class="over">Surface Area</span></td><td class="cell"></td><td class="cell"></td></tr>
        ${["26.14", "6.48", "16.91", "16.91", ""].map((v) => html`<tr><td class="cell">${v}</td><td class="cell"></td><td class="cell"></td></tr>`)}</tbody>
      </table>`;
  }
}

@customElement("app-root")
class AppRoot extends LitElement {
  static styles = css`
    :host { display: grid; grid-template-columns: 257px minmax(0, 1fr) 256px; align-items: start; height: 100vh; overflow: hidden; background: #fff; }
    .peek { margin-top: 420px; }
  `;
  render() {
    return html`<left-workbook></left-workbook><front-workbook></front-workbook><right-workbook class="peek"></right-workbook>`;
  }
}
